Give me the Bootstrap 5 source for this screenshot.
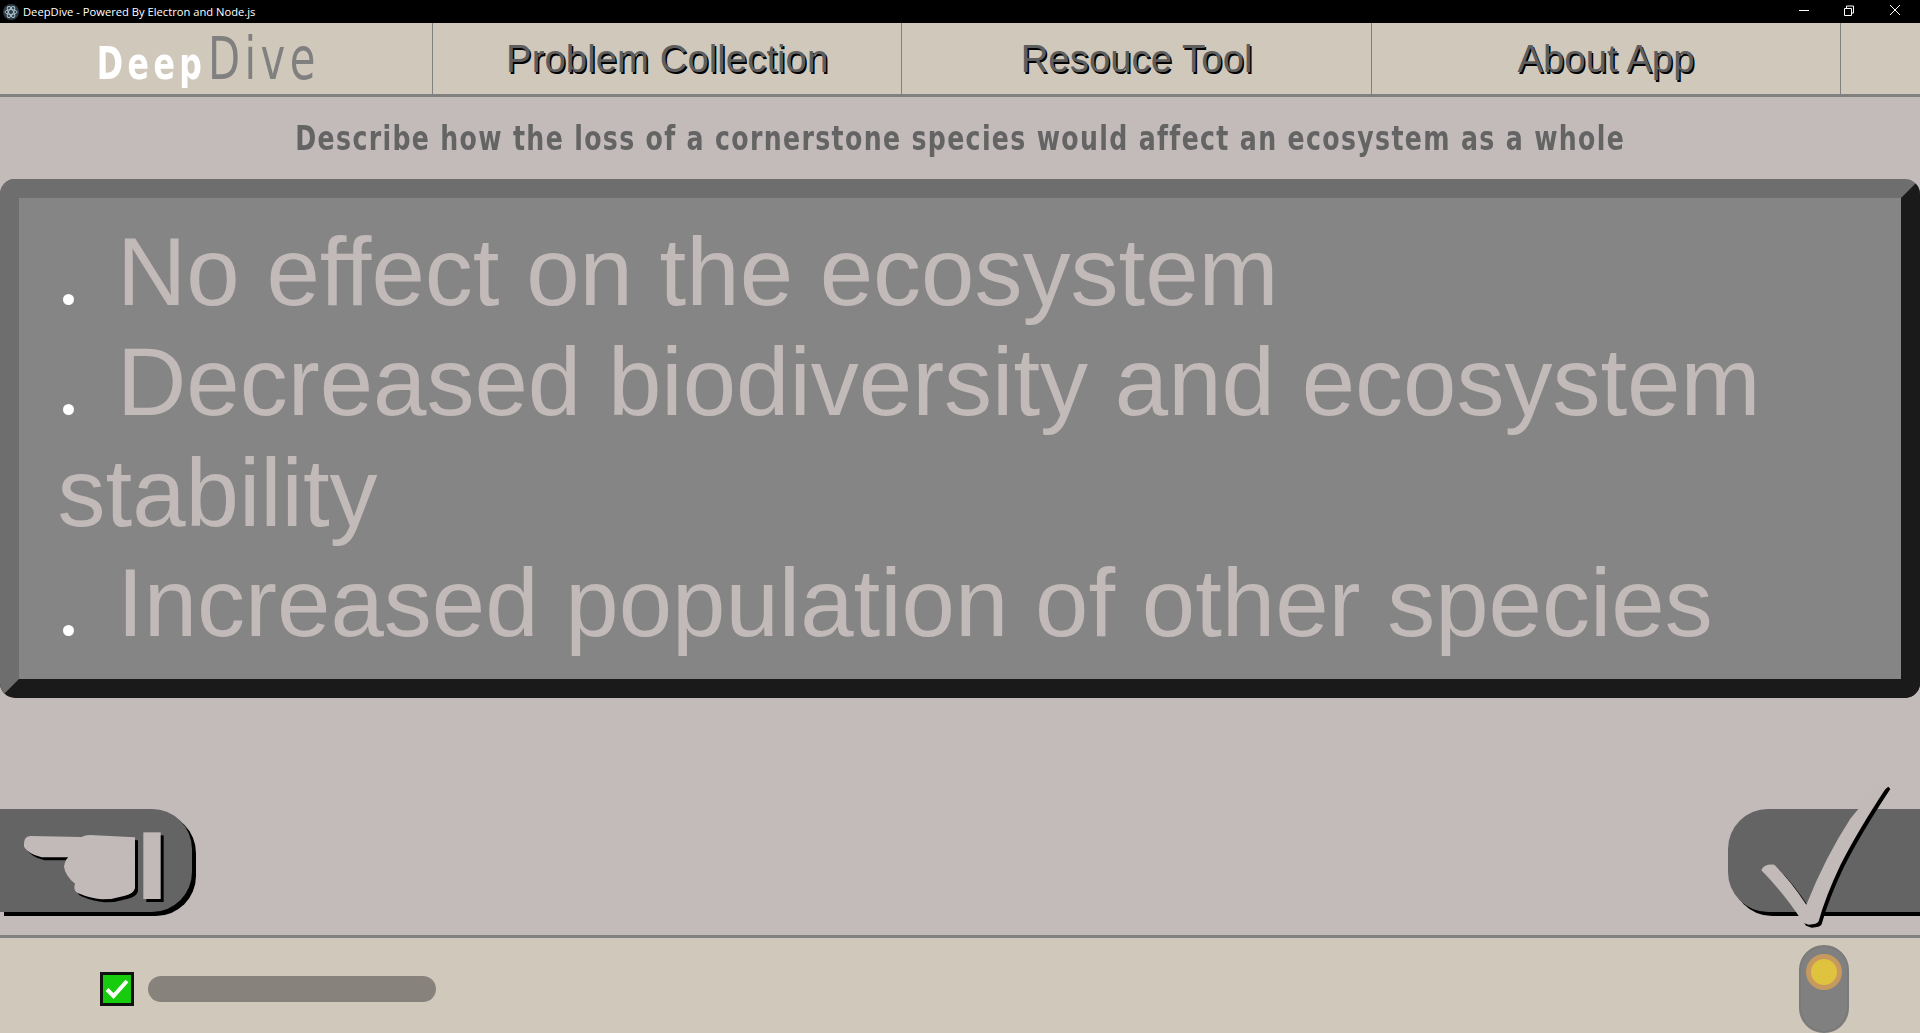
<!DOCTYPE html>
<html lang="en">
<head>
<meta charset="utf-8">
<title>DeepDive</title>
<link href="https://cdn.jsdelivr.net/npm/bootstrap@5.3.0/dist/css/bootstrap.min.css" rel="stylesheet">
<style>
html,body{height:100%;}
body{background:#c3baba;font-family:"Liberation Sans",Arial,sans-serif;overflow:hidden;}
.shell{height:1033px;}
.titlebar{height:23px;background:#000;color:#fff;font:11.2px/23px "Open Sans","Noto Sans",sans-serif;padding-left:3px;}
.appicon{width:16px;height:16px;margin-right:4px;}
.winbtns svg{display:block;}
.topnav{height:74px;background:#d0c9bb;border-bottom:3px solid #808080;}
.logocell{width:433px;border-right:1px solid #808080;padding-right:15px;}
.logotext{display:inline-block;font-family:"DejaVu Sans",sans-serif;font-stretch:condensed;line-height:1;transform:scaleX(.8);white-space:nowrap;}
.logo-a{color:#fff;font-size:44px;font-weight:700;letter-spacing:5.5px;}
.logo-b{color:#808080;font-size:58px;font-weight:400;letter-spacing:5.5px;margin-left:2px;}
.navcell{width:469.4px;border-right:1px solid #808080;font-size:38.4px;color:#5e5e5e;text-shadow:1.5px 2px 0 #000;text-decoration:none;}
.navrest{flex:1;}
.prompt{height:82px;margin:0;padding-top:2px;overflow:hidden;}
.prompt-text{display:inline-block;white-space:nowrap;font-family:"DejaVu Sans",sans-serif;font-stretch:condensed;font-weight:700;font-size:33px;color:#646464;letter-spacing:1.55px;transform:scaleX(.85);}
.answers{height:519px;background:#858585;border:19px solid;border-color:#6e6e6e #1a1a1a #1a1a1a #6e6e6e;border-radius:15px;padding:19px 20px 0 38.5px;font-size:96px;line-height:110.4px;color:#c2b9b9;}
.answers p{margin:0;}
.dotmark{display:inline-block;width:11px;height:11px;border-radius:50%;background:#fff;margin:0 43px 0 5.5px;}
.actions{flex:1;align-items:flex-end;padding-bottom:23px;}
.pill{position:relative;height:103px;background:#646464;box-shadow:4px 4px 0 #000;}
.pill-l{width:192px;border-radius:0 40px 40px 0;}
.pill-r{width:192px;border-radius:40px 0 0 40px;}
.glyph{position:absolute;fill:#c2b9b9;filter:drop-shadow(3px 3px 0 #000);overflow:visible;}
.glyph-hand{left:20px;top:21px;}
.glyph-check{left:28.7px;top:-26.7px;}
.bottombar{height:98px;background:#d0c9bb;border-top:3px solid #808080;padding:6px 71px 0 100px;}
.tick{width:34px;height:34px;background:#16cc0c;border:3px solid #111;}
.meter{width:288px;height:26px;background:#87837c;border-radius:13px;margin-left:14px;}
.switcher{width:50px;height:88px;background:#808080;border:2px solid #7a7a7a;border-radius:25px;padding-top:7px;}
.knob{width:36px;height:36px;border-radius:50%;background:#dfc23e;border:5px solid #c69a5f;}
</style>
</head>
<body>
<div class="shell d-flex flex-column">
  <div class="titlebar d-flex align-items-center">
    <svg class="appicon" viewBox="0 0 16 16"><circle cx="8" cy="8" r="8" fill="#2f3a44"/><g fill="none" stroke="#a9c4d0" stroke-width="1"><ellipse cx="8" cy="8" rx="6" ry="2.4"/><ellipse cx="8" cy="8" rx="6" ry="2.4" transform="rotate(60 8 8)"/><ellipse cx="8" cy="8" rx="6" ry="2.4" transform="rotate(120 8 8)"/></g></svg>
    <span>DeepDive - Powered By Electron and Node.js</span>
    <div class="winbtns ms-auto">
      <svg width="121" height="23" viewBox="0 0 121 23" fill="none" stroke="#fff" stroke-width="1"><path d="M0 10.5H10"/><path d="M45.5 8.5h7v7h-7zM47.5 8.5v-2.5h7v7h-2"/><path d="M91 5l10 10M101 5l-10 10"/></svg>
    </div>
  </div>

  <nav class="topnav d-flex">
    <div class="logocell d-flex align-items-center justify-content-center"><span class="logotext"><span class="logo-a">Deep</span><span class="logo-b">Dive</span></span></div>
    <a class="navcell d-flex align-items-center justify-content-center" href="#">Problem Collection</a>
    <a class="navcell d-flex align-items-center justify-content-center" href="#">Resouce Tool</a>
    <a class="navcell d-flex align-items-center justify-content-center" href="#">About App</a>
    <div class="navrest"></div>
  </nav>

  <h1 class="prompt d-flex align-items-center justify-content-center"><span class="prompt-text">Describe how the loss of a cornerstone species would affect an ecosystem as a whole</span></h1>

  <div class="answers">
    <p><span class="dotmark"></span>No effect on the ecosystem</p>
    <p><span class="dotmark"></span>Decreased biodiversity and ecosystem stability</p>
    <p><span class="dotmark"></span>Increased population of other species</p>
  </div>

  <div class="actions d-flex justify-content-between">
    <div class="pill pill-l">
      <svg class="glyph glyph-hand" width="146.67" height="73.33" viewBox="60 150 440 220"><path d="M72 190Q72 170 90 168L245 171Q255 165 270 165L405 172V325Q400 342 375 347Q340 358 305 358Q270 355 235 340Q218 332 225 312Q195 285 192 260Q195 240 205 232H125Q85 222 72 200Z"/><rect x="430" y="157" width="52" height="200"/></svg>
    </div>
    <div class="pill pill-r">
      <svg class="glyph glyph-check" width="136.67" height="146.67" viewBox="170 40 410 440"><path d="M183 305Q190 285 222 288Q270 335 318 408Q375 265 450 150Q500 85 555 45L561 52Q470 190 420 290Q375 385 355 458Q350 468 325 468L308 462Q260 385 183 305Z"/></svg>
    </div>
  </div>

  <footer class="bottombar d-flex align-items-center">
    <span class="tick d-flex align-items-center justify-content-center"><svg width="28" height="28" viewBox="0 0 28 28" fill="none" stroke="#fff" stroke-width="4"><path d="M4 14.5l6.5 6.5L24 6"/></svg></span>
    <div class="meter"></div>
    <div class="switcher ms-auto d-flex justify-content-center"><div class="knob"></div></div>
  </footer>
</div>
<script src="https://cdn.jsdelivr.net/npm/bootstrap@5.3.0/dist/js/bootstrap.bundle.min.js"></script>
</body>
</html>
